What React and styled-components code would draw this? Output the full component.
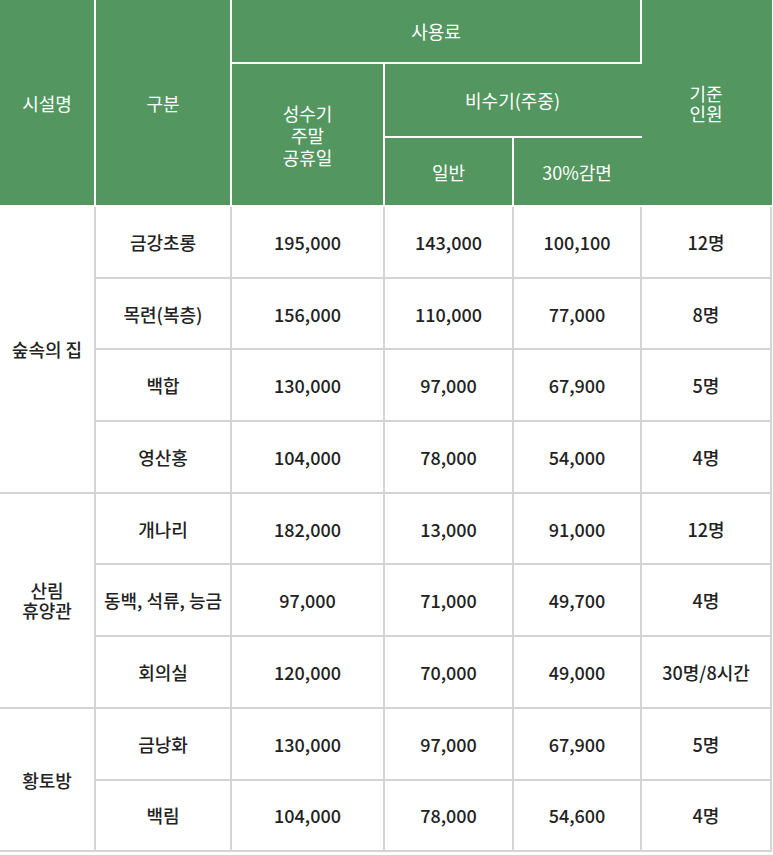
import styled, { createGlobalStyle } from "styled-components";

const GlobalStyle = createGlobalStyle`
  html, body {
    margin: 0;
    padding: 0;
    background: #fff;
  }
  body {
    font-family: "Noto Sans CJK KR", "Noto Sans", sans-serif;
  }
`;

const Table = styled.table`
  width: 771px;
  table-layout: fixed;
  border-collapse: collapse;
  border-spacing: 0;
  font-size: 18px;
  text-align: center;
`;

const HeadRow = styled.tr`
  height: ${(p) => p.h}px;
`;

const Th = styled.th`
  background: #53965f;
  color: #fff;
  font-weight: 400;
  line-height: ${(p) => (p.tight ? "20px" : "22px")};
  border-right: 2px solid #fff;
  border-bottom: 2px solid #fff;
  padding: 0;
  vertical-align: middle;

  &:last-child {
    border-right: 2px solid #53965f;
  }
`;

const BodyRow = styled.tr`
  height: 71.7px;
`;

const Td = styled.td`
  color: #222;
  font-weight: 500;
  line-height: 20px;
  border-right: 2px solid #d4d4d4;
  border-bottom: 2px solid #d4d4d4;
  padding: 0;
  vertical-align: middle;
  white-space: nowrap;
`;

const groups = [
  {
    name: ["숲속의 집"],
    rows: [
      ["금강초롱", "195,000", "143,000", "100,100", "12명"],
      ["목련(복층)", "156,000", "110,000", "77,000", "8명"],
      ["백합", "130,000", "97,000", "67,900", "5명"],
      ["영산홍", "104,000", "78,000", "54,000", "4명"],
    ],
  },
  {
    name: ["산림", "휴양관"],
    rows: [
      ["개나리", "182,000", "13,000", "91,000", "12명"],
      ["동백, 석류, 능금", "97,000", "71,000", "49,700", "4명"],
      ["회의실", "120,000", "70,000", "49,000", "30명/8시간"],
    ],
  },
  {
    name: ["황토방"],
    rows: [
      ["금낭화", "130,000", "97,000", "67,900", "5명"],
      ["백림", "104,000", "78,000", "54,600", "4명"],
    ],
  },
];

const Lines = ({ parts }) =>
  parts.map((p, i) => (
    <span key={i}>
      {i > 0 && <br />}
      {p}
    </span>
  ));

export default function App() {
  return (
    <>
      <GlobalStyle />
      <Table>
        <colgroup>
          <col style={{ width: 95 }} />
          <col style={{ width: 136 }} />
          <col style={{ width: 153 }} />
          <col style={{ width: 129 }} />
          <col style={{ width: 128 }} />
          <col style={{ width: 130 }} />
        </colgroup>
        <thead>
          <HeadRow h={63}>
            <Th rowSpan={3}>시설명</Th>
            <Th rowSpan={3}>구분</Th>
            <Th colSpan={3}>사용료</Th>
            <Th rowSpan={3} tight>
              <Lines parts={["기준", "인원"]} />
            </Th>
          </HeadRow>
          <HeadRow h={74}>
            <Th rowSpan={2}>
              <Lines parts={["성수기", "주말", "공휴일"]} />
            </Th>
            <Th colSpan={2}>비수기(주중)</Th>
          </HeadRow>
          <HeadRow h={69}>
            <Th>일반</Th>
            <Th>30%감면</Th>
          </HeadRow>
        </thead>
        <tbody>
          {groups.map((g) =>
            g.rows.map((r, i) => (
              <BodyRow key={r[0]}>
                {i === 0 && (
                  <Td rowSpan={g.rows.length}>
                    <Lines parts={g.name} />
                  </Td>
                )}
                {r.map((c, j) => (
                  <Td key={j}>{c}</Td>
                ))}
              </BodyRow>
            ))
          )}
        </tbody>
      </Table>
    </>
  );
}
